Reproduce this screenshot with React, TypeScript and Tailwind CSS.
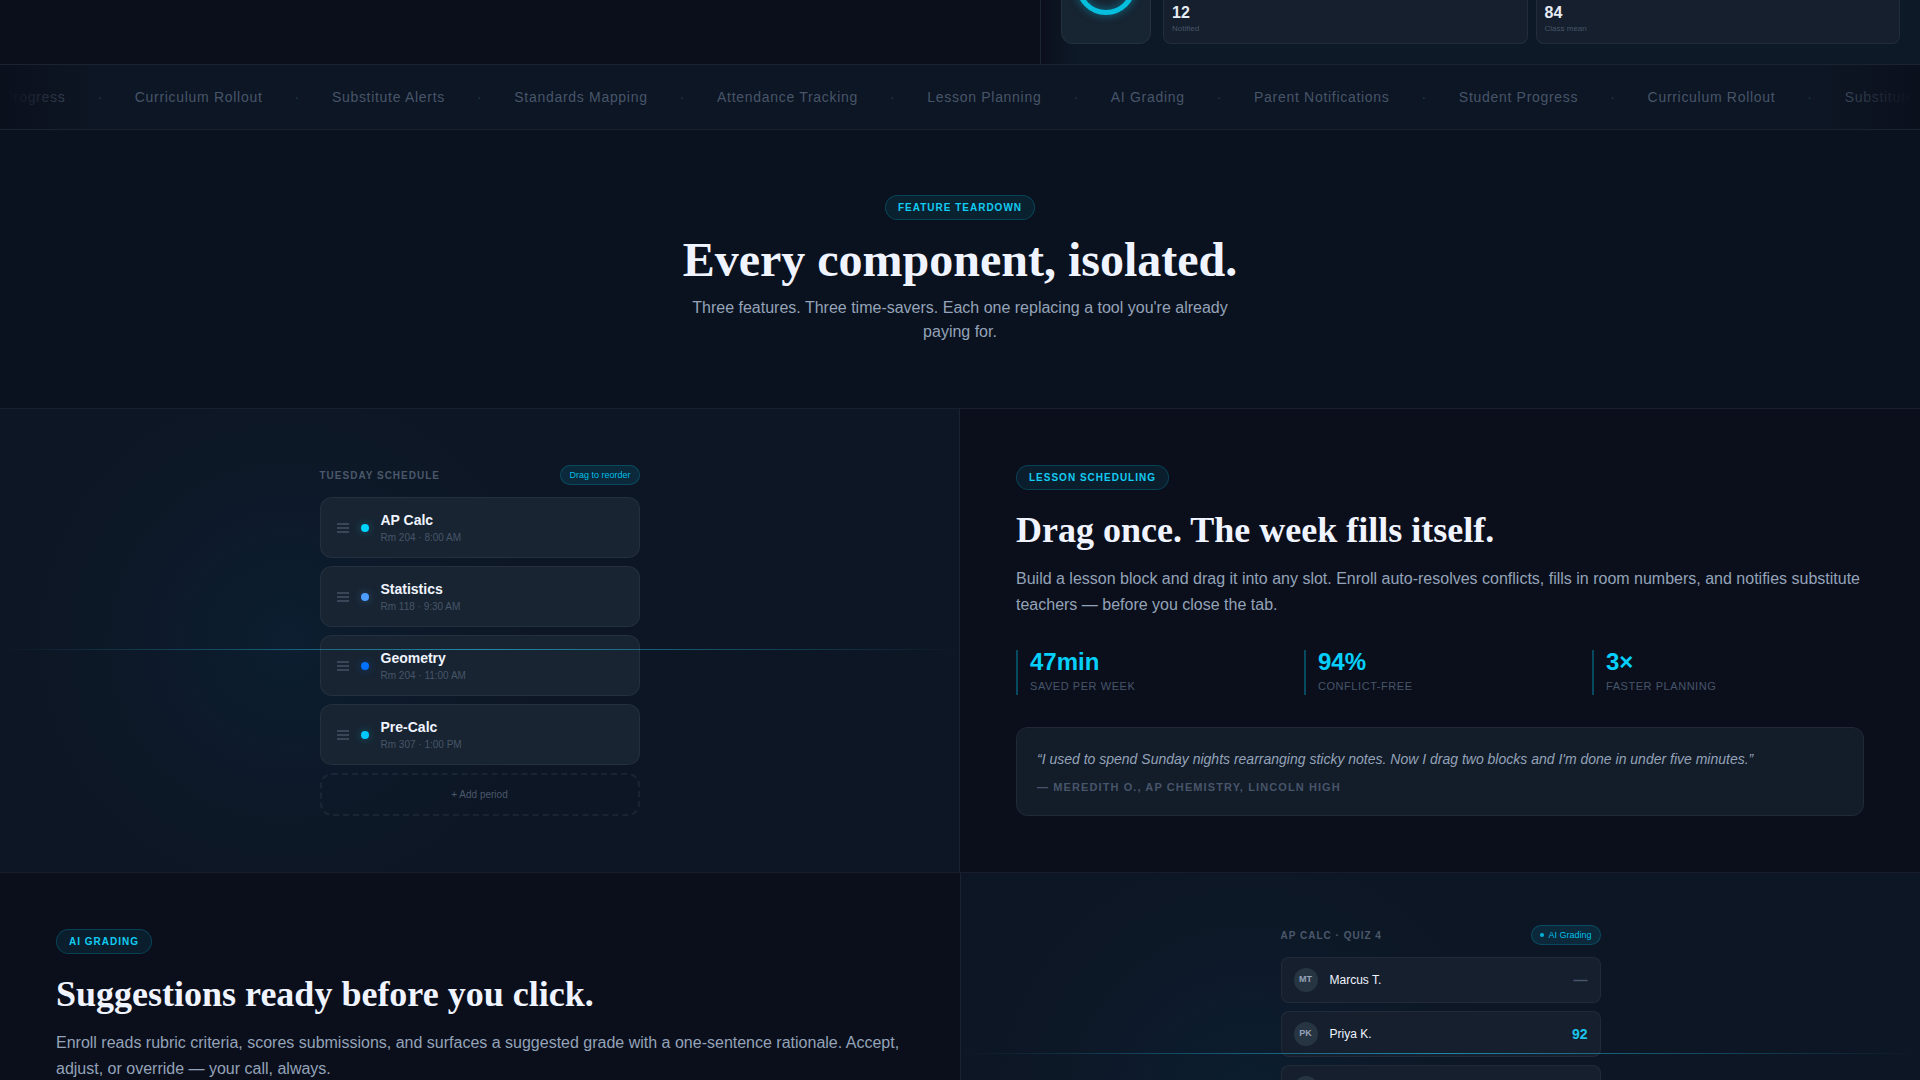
import { clsx } from 'clsx'

const topics = [
  'Student Progress',
  'Curriculum Rollout',
  'Substitute Alerts',
  'Standards Mapping',
  'Attendance Tracking',
  'Lesson Planning',
  'AI Grading',
  'Parent Notifications'
]

const periods = [
  { name: 'AP Calc', meta: 'Rm 204 · 8:00 AM', dot: 'bg-[#00d4ff] shadow-[0_0_8px_#00d4ff60]' },
  { name: 'Statistics', meta: 'Rm 118 · 9:30 AM', dot: 'bg-[#4f9cff] shadow-[0_0_8px_#4f9cff60]' },
  { name: 'Geometry', meta: 'Rm 204 · 11:00 AM', dot: 'bg-[#0070ff] shadow-[0_0_8px_#0070ff60]' },
  { name: 'Pre-Calc', meta: 'Rm 307 · 1:00 PM', dot: 'bg-[#00c8ff] shadow-[0_0_8px_#00c8ff60]' }
]

const stats = [
  { value: '47min', label: 'Saved per week' },
  { value: '94%', label: 'Conflict-free' },
  { value: '3×', label: 'Faster planning' }
]

const students = [
  { initials: 'MT', name: 'Marcus T.', score: '—' },
  { initials: 'PK', name: 'Priya K.', score: '92' },
  { initials: '', name: '', score: '' }
]

const Badge = ({ children }: { children: React.ReactNode }) => (
  <div className="w-fit rounded-full border border-[#00d4ff]/20 bg-[#00d4ff]/8 px-3 py-1 text-[10px] leading-[15px] font-bold tracking-widest uppercase text-[#12ccf2]">
    {children}
  </div>
)

const Pill = ({ children }: { children: React.ReactNode }) => (
  <span className="flex items-center gap-1 rounded-full border border-[#00d4ff]/20 bg-[#00d4ff]/10 px-2 py-0.5 text-[9px] leading-[14px] text-[#00d4ff]/90">
    {children}
  </span>
)

const PanelTitle = ({ children }: { children: React.ReactNode }) => (
  <h3 className="text-[10px] leading-[15px] font-bold tracking-widest uppercase text-[#4b586b]">
    {children}
  </h3>
)

const ScanLine = ({ className }: { className: string }) => (
  <div
    className={clsx(
      'absolute inset-x-0 h-px bg-linear-to-r from-transparent via-[#22b4dc]/70 to-transparent',
      className
    )}
  />
)

const FeatureText = ({ tag, title, body }: { tag: string; title: string; body: string }) => (
  <>
    <Badge>{tag}</Badge>
    <h2 className="mt-5 font-['Liberation_Serif',serif] text-4xl leading-10 font-bold text-[#f0f4ff]">
      {title}
    </h2>
    <p className="mt-4 text-base leading-[26px] text-[#94a3b8]">{body}</p>
  </>
)

const Hero = () => (
  <section className="flex h-16">
    <div className="flex-1" />
    <div className="flex w-[880px] items-end gap-3 border-l border-white/5 bg-linear-to-r from-[#0b0f1c] via-[#0d1927] via-4% to-[#0d1927] px-5 pb-5">
      <div className="flex h-28 w-[90px] items-end justify-center rounded-xl border border-white/6 bg-[#172431] pb-7">
        <svg className="size-[60px] drop-shadow-[0_0_4px_#00d4ff80]" viewBox="0 0 60 60" fill="none">
          <circle cx="30" cy="30" r="27.5" stroke="#06bfdf" strokeWidth="5" />
        </svg>
      </div>
      <div className="grid flex-1 grid-cols-2 gap-2">
        {[
          ['12', 'Notified'],
          ['84', 'Class mean']
        ].map(([value, label]) => (
          <div
            key={label}
            className="flex h-20 flex-col justify-end rounded-lg border border-white/6 bg-[#151f2e] p-2"
          >
            <strong className="text-base leading-5 text-[#e6ebf5]">{value}</strong>
            <span className="text-[8px] leading-3 text-[#475569]">{label}</span>
          </div>
        ))}
      </div>
    </div>
  </section>
)

const Ticker = () => (
  <section className="relative overflow-hidden border-y border-white/6 bg-[#0d1624]">
    <ul className="-ml-[54px] flex h-16 w-max items-center gap-8 text-sm tracking-wider text-[#475569]">
      {[...topics, ...topics].map((topic, i) => (
        <li key={i} className="flex items-center gap-8 whitespace-nowrap">
          {topic}
          <span className="text-[#1e3a4c]">·</span>
        </li>
      ))}
    </ul>
    <div className="absolute inset-y-0 left-0 w-24 bg-linear-to-r from-[#0b101d] from-8% to-transparent" />
    <div className="absolute inset-y-0 right-0 w-24 bg-linear-to-l from-[#0b101d] from-8% to-transparent" />
  </section>
)

const SchedulePanel = () => (
  <div className="relative flex justify-center border-r border-white/6 bg-[#0d1624] bg-[radial-gradient(circle_at_30%_50%,#0090e010,transparent_36%)] py-14">
    <div className="w-full max-w-xs">
      <div className="mb-3 flex items-center justify-between">
        <PanelTitle>Tuesday schedule</PanelTitle>
        <Pill>Drag to reorder</Pill>
      </div>
      <ul className="flex flex-col gap-2">
        {periods.map((p) => (
          <li
            key={p.name}
            className="flex items-center gap-3 rounded-xl border border-white/6 bg-[#182431] px-4 py-3"
          >
            <div className="flex w-3 flex-col gap-0.5">
              <span className="h-0.5 bg-[#475569]/70" />
              <span className="h-0.5 bg-[#475569]/70" />
              <span className="h-0.5 bg-[#475569]/70" />
            </div>
            <span className={clsx('size-2 rounded-full', p.dot)} />
            <div>
              <p className="text-sm leading-5 font-semibold text-[#f0f4ff]">{p.name}</p>
              <p className="text-[10px] leading-[15px] text-[#475569]">{p.meta}</p>
            </div>
          </li>
        ))}
      </ul>
      <button className="mt-2 block w-full rounded-xl border-2 border-dashed border-white/6 py-3 text-[10px] leading-[15px] text-[#4b586b]">
        + Add period
      </button>
    </div>
    <ScanLine className="top-60" />
  </div>
)

const GradingPanel = () => (
  <div className="relative flex justify-center border-l border-white/6 bg-[#0d1624] bg-[radial-gradient(circle_at_30%_50%,#0090e010,transparent_36%)] pt-[52px]">
    <div className="w-full max-w-xs">
      <div className="mb-3 flex items-center justify-between">
        <PanelTitle>AP Calc · Quiz 4</PanelTitle>
        <Pill>
          <span className="size-1 rounded-full bg-[#00d4ff]/80" />
          AI Grading
        </Pill>
      </div>
      <ul className="flex flex-col gap-2">
        {students.map((s, i) => (
          <li
            key={i}
            className="flex items-center gap-3 rounded-lg border border-white/5 bg-[#161f2e] px-3 py-[10px]"
          >
            <span className="flex size-6 items-center justify-center rounded-full bg-[#273543] text-[9px] font-bold text-[#94a3b8]">
              {s.initials}
            </span>
            <span className="flex-1 text-xs text-[#f0f4ff]">{s.name}</span>
            <span
              className={clsx(
                'text-sm leading-5 font-bold',
                s.score === '—' ? 'text-[#475569]' : 'text-[#1cc4e8]'
              )}
            >
              {s.score}
            </span>
          </li>
        ))}
      </ul>
    </div>
    <ScanLine className="top-[180px]" />
  </div>
)

const App = () => {
  return (
    <main className="h-screen overflow-hidden bg-[#0b0f1c] font-['Liberation_Sans',sans-serif] text-[#f0f4ff]">
      <Hero />
      <Ticker />

      <section className="flex flex-col items-center border-b border-white/6 bg-[#0b121f] px-6 pt-[65px] pb-16 text-center">
        <Badge>Feature teardown</Badge>
        <h1 className="mt-4 font-['Liberation_Serif',serif] text-5xl leading-[48px] font-bold">
          Every component, isolated.
        </h1>
        <p className="mt-3 max-w-xl text-base leading-6 text-[#94a3b8]">
          Three features. Three time-savers. Each one replacing a tool you're already paying for.
        </p>
      </section>

      <section className="grid grid-cols-2 border-b border-white/6">
        <SchedulePanel />
        <div className="p-14">
          <FeatureText
            tag="Lesson scheduling"
            title="Drag once. The week fills itself."
            body="Build a lesson block and drag it into any slot. Enroll auto-resolves conflicts, fills in room numbers, and notifies substitute teachers — before you close the tab."
          />
          <dl className="mt-8 grid grid-cols-3 gap-4">
            {stats.map((s) => (
              <div key={s.label} className="flex flex-col-reverse gap-1 border-l-2 border-[#00d4ff]/30 pl-3">
                <dt className="text-[11px] leading-[17px] tracking-wider uppercase text-[#475569]">
                  {s.label}
                </dt>
                <dd className="text-2xl leading-6 font-bold text-[#05cffa]">{s.value}</dd>
              </div>
            ))}
          </dl>
          <figure className="mt-8 rounded-xl border border-white/6 bg-[#131c29] p-5">
            <blockquote className="text-sm leading-[23px] text-[#94a3b8] italic">
              “I used to spend Sunday nights rearranging sticky notes. Now I drag two blocks and I'm
              done in under five minutes.”
            </blockquote>
            <figcaption className="mt-2 text-[11px] leading-4 font-bold tracking-widest uppercase text-[#475569]">
              — Meredith O., AP Chemistry, Lincoln High
            </figcaption>
          </figure>
        </div>
      </section>

      <section className="grid min-h-[464px] grid-cols-2">
        <div className="p-14">
          <FeatureText
            tag="AI grading"
            title="Suggestions ready before you click."
            body="Enroll reads rubric criteria, scores submissions, and surfaces a suggested grade with a one-sentence rationale. Accept, adjust, or override — your call, always."
          />
        </div>
        <GradingPanel />
      </section>
    </main>
  )
}

export default App
